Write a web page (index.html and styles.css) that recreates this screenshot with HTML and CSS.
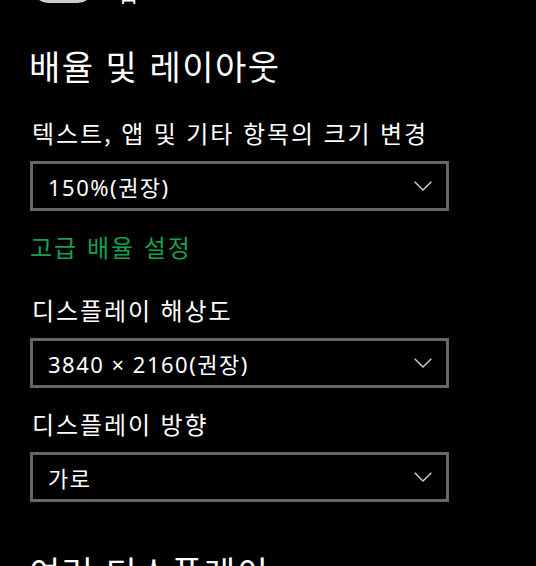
FILE: index.html
```html
<!DOCTYPE html>
<html lang="ko">
  <head>
    <meta charset="UTF-8" />
    <meta name="viewport" content="width=device-width, initial-scale=1.0" />
    <title>디스플레이</title>
    <link rel="stylesheet" href="styles.css">
  </head>
  <body>
    <div class="page">
      <!-- night light toggle, scrolled mostly out of view -->
      <div class="toggle-row">
        <span class="toggle"></span>
        <span class="toggle-label">끔</span>
      </div>

      <h2 class="section-title">배율 및 레이아웃</h2>

      <p class="field-label first">텍스트, 앱 및 기타 항목의 크기 변경</p>
      <div class="combo">
        <span>150%(권장)</span>
        <svg class="chevron" viewBox="0 0 18 10" width="18" height="10">
          <path d="M0.7 0.7 L9 9 L17.3 0.7" fill="none" stroke="#cfcfcf" stroke-width="1.4" />
        </svg>
      </div>

      <a class="link" href="#">고급 배율 설정</a>

      <p class="field-label">디스플레이 해상도</p>
      <div class="combo">
        <span>3840 × 2160(권장)</span>
        <svg class="chevron" viewBox="0 0 18 10" width="18" height="10">
          <path d="M0.7 0.7 L9 9 L17.3 0.7" fill="none" stroke="#cfcfcf" stroke-width="1.4" />
        </svg>
      </div>

      <p class="field-label">디스플레이 방향</p>
      <div class="combo">
        <span>가로</span>
        <svg class="chevron" viewBox="0 0 18 10" width="18" height="10">
          <path d="M0.7 0.7 L9 9 L17.3 0.7" fill="none" stroke="#cfcfcf" stroke-width="1.4" />
        </svg>
      </div>

      <h2 class="section-title next">여러 디스플레이</h2>
    </div>
  </body>
</html>
```

FILE: styles.css
```css
body {
  font-family: "Noto Sans CJK KR", "Noto Sans", sans-serif;
  background-color: #000;
  color: #fff;
  margin: 0;
  padding: 0;
  overflow: hidden;
}

.page {
  padding-left: 30px;
  width: 419px;
}

.toggle-row {
  display: flex;
  align-items: flex-end;
  gap: 26px;
  height: 4px;
  overflow: hidden;
  padding-left: 3px;
}

.toggle {
  flex: none;
  width: 60px;
  height: 30px;
  margin-bottom: 1px;
  box-sizing: border-box;
  border: 3px solid #cccccc;
  border-radius: 15px;
}

.toggle-label {
  font-size: 21px;
  line-height: 21px;
  margin-bottom: -3px;
}

.section-title {
  font-size: 34px;
  font-weight: normal;
  letter-spacing: 1.5px;
  line-height: 40px;
  margin: 42px 0 0 -1px;
}

.section-title.next {
  margin-top: 50px;
}

.field-label {
  font-size: 24px;
  letter-spacing: 1.9px;
  line-height: 30px;
  margin: 33px 0 13px 2px;
}

.field-label.first {
  margin-top: 32px;
}

.combo {
  display: flex;
  align-items: center;
  justify-content: space-between;
  height: 50px;
  box-sizing: border-box;
  border: 3px solid #666666;
  padding: 0 14px 0 15px;
  font-family: "Noto Sans", "Noto Sans CJK KR", sans-serif;
  font-size: 22px;
  letter-spacing: 1.5px;
}

.combo + .field-label {
  margin-top: 21px;
}

.chevron {
  flex: none;
}

.link {
  display: block;
  margin-top: 21px;
  color: #16a04c;
  font-size: 24px;
  letter-spacing: 2px;
  line-height: 30px;
  text-decoration: none;
}
```
